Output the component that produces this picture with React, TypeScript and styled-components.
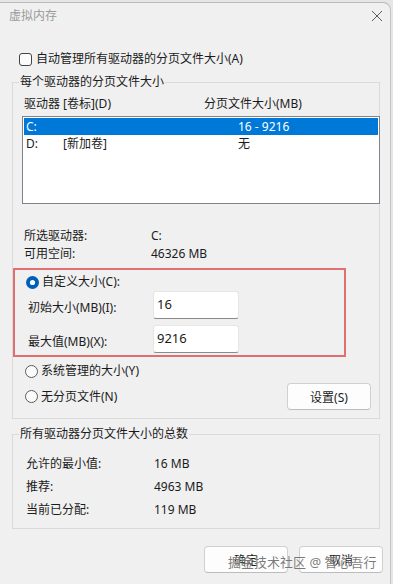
import styled, { createGlobalStyle } from 'styled-components';

const GlobalStyle = createGlobalStyle`
  html, body {
    margin: 0;
    padding: 0;
    background: #e6e6e6;
  }
  * {
    box-sizing: border-box;
  }
`;

const drives = [
  { letter: 'C:', label: '', size: '16 - 9216', selected: true },
  { letter: 'D:', label: '[新加卷]', size: '无', selected: false },
];

const totals = [
  { label: '允许的最小值:', value: '16 MB' },
  { label: '推荐:', value: '4963 MB' },
  { label: '当前已分配:', value: '119 MB' },
];

const Radio = ({ checked }: { checked?: boolean }) => (
  <RadioIcon width={13} height={13} viewBox="0 0 13 13">
    {checked ? (
      <>
        <circle cx="6.5" cy="6.5" r="6.5" fill="#005fb8" />
        <circle cx="6.5" cy="6.5" r="2.6" fill="#ffffff" />
      </>
    ) : (
      <circle cx="6.5" cy="6.5" r="6" fill="#fbfbfb" stroke="#5a5a5a" strokeWidth="1" />
    )}
  </RadioIcon>
);

const App = () => {
  return (
    <>
      <GlobalStyle />
      <Window>
        <TitleBar>
          <Title>虚拟内存</Title>
          <CloseIcon width={12} height={12} viewBox="0 0 12 12">
            <path d="M1 1 L11 11 M11 1 L1 11" stroke="#5c5c5c" strokeWidth="1" fill="none" />
          </CloseIcon>
        </TitleBar>

        <Body>
          <CheckRow>
            <CheckBox />
            <span>自动管理所有驱动器的分页文件大小(A)</span>
          </CheckRow>

          <Group>
            <Legend>每个驱动器的分页文件大小</Legend>
            <ListHeader>
              <DriveCol>驱动器 [卷标](D)</DriveCol>
              <span>分页文件大小(MB)</span>
            </ListHeader>
            <DriveList>
              {drives.map((drive) => (
                <DriveRow key={drive.letter} $selected={drive.selected}>
                  <LetterCell>{drive.letter}</LetterCell>
                  <LabelCell>{drive.label}</LabelCell>
                  <span>{drive.size}</span>
                </DriveRow>
              ))}
            </DriveList>

            <InfoList>
              <InfoRow>
                <InfoLabel>所选驱动器:</InfoLabel>
                <span>C:</span>
              </InfoRow>
              <InfoRow>
                <InfoLabel>可用空间:</InfoLabel>
                <span>46326 MB</span>
              </InfoRow>
            </InfoList>

            <Highlight>
              <RadioRow>
                <Radio checked />
                <span>自定义大小(C):</span>
              </RadioRow>
              <SizeGrid>
                <SizeLabel>初始大小(MB)(I):</SizeLabel>
                <SizeInput>16</SizeInput>
                <SizeLabel>最大值(MB)(X):</SizeLabel>
                <SizeInput>9216</SizeInput>
              </SizeGrid>
            </Highlight>

            <RadioRow $indent>
              <Radio />
              <span>系统管理的大小(Y)</span>
            </RadioRow>
            <SetRow>
              <RadioRow>
                <Radio />
                <span>无分页文件(N)</span>
              </RadioRow>
              <Button $width={84}>设置(S)</Button>
            </SetRow>
          </Group>

          <TotalGroup>
            <Legend>所有驱动器分页文件大小的总数</Legend>
            <TotalList>
              {totals.map((item) => (
                <TotalRow key={item.label}>
                  <TotalLabel>{item.label}</TotalLabel>
                  <span>{item.value}</span>
                </TotalRow>
              ))}
            </TotalList>
          </TotalGroup>
        </Body>

        <Footer>
          <Button $width={84}>确定</Button>
          <Button $width={84}>取消</Button>
          <Watermark>掘金技术社区 @ 智心吾行</Watermark>
        </Footer>
      </Window>
    </>
  );
};

export default App;

const Window = styled.div`
  position: relative;
  width: 391px;
  height: 582px;
  margin-top: 2px;
  background: #f0f0f0;
  border-top: 1px solid #b9b9b9;
  border-right: 1px solid #c4c4c4;
  border-top-right-radius: 8px;
  font-family: 'Noto Sans', 'Noto Sans CJK SC', sans-serif;
  font-size: 12px;
  color: #1b1b1b;
  overflow: hidden;
`;

const TitleBar = styled.div`
  display: flex;
  align-items: center;
  justify-content: space-between;
  height: 25px;
  padding: 0 7px 0 9px;
`;

const Title = styled.span`
  color: #9a9a9a;
  font-size: 12px;
  line-height: 14px;
`;

const CloseIcon = styled.svg`
  display: block;
`;

const Body = styled.div`
  padding: 0 10px 0 12px;
`;

const CheckRow = styled.div`
  display: flex;
  align-items: center;
  column-gap: 4px;
  height: 16px;
  margin: 23px 0 0 7px;
  line-height: 16px;
`;

const CheckBox = styled.span`
  display: block;
  width: 13px;
  height: 13px;
  border: 1px solid #444;
  border-radius: 3px;
  background: #fbfbfb;
`;

const Group = styled.fieldset`
  margin: 8px 0 0;
  padding: 0 0 8px;
  min-width: 0;
  border: 1px solid #dadada;
`;

const TotalGroup = styled(Group)`
  margin-top: 8px;
  padding-bottom: 7px;
`;

const Legend = styled.legend`
  margin-left: 6px;
  padding: 0 1px;
  line-height: 14px;
  font-size: 12px;
`;

const ListHeader = styled.div`
  display: flex;
  height: 16px;
  margin-top: 7px;
  padding-left: 11px;
  line-height: 16px;
`;

const DriveCol = styled.span`
  width: 180px;
`;

const DriveList = styled.div`
  height: 88px;
  margin: 4px -1px 0 9px;
  padding: 1px;
  background: #ffffff;
  border: 1px solid #7f858c;
`;

const DriveRow = styled.div<{ $selected?: boolean }>`
  display: flex;
  height: 17px;
  padding-left: 2px;
  line-height: 17px;
  background: ${({ $selected }) => ($selected ? '#0078d7' : 'transparent')};
  color: ${({ $selected }) => ($selected ? '#ffffff' : '#1b1b1b')};
`;

const LetterCell = styled.span`
  width: 37px;
`;

const LabelCell = styled.span`
  width: 175px;
`;

const InfoList = styled.div`
  margin-top: 23px;
  padding-left: 11px;
`;

const InfoRow = styled.div`
  display: flex;
  height: 18px;
  line-height: 18px;
`;

const InfoLabel = styled.span`
  width: 127px;
`;

const Highlight = styled.div`
  width: 333px;
  margin-top: 5px;
  padding: 0 0 2px 11px;
  border: 2px solid #e07070;
`;

const RadioRow = styled.div<{ $indent?: boolean }>`
  display: flex;
  align-items: center;
  column-gap: 3px;
  height: 16px;
  margin: ${({ $indent }) => ($indent ? '6px 0 0 12px' : '4px 0 0')};
  line-height: 16px;
`;

const RadioIcon = styled.svg`
  display: block;
  flex-shrink: 0;
`;

const SizeGrid = styled.div`
  display: grid;
  grid-template-columns: 125px 86px;
  row-gap: 6px;
  margin-top: 1px;
  padding-left: 2px;
`;

const SizeLabel = styled.span`
  align-self: center;
  padding-top: 3px;
`;

const SizeInput = styled.div`
  height: 28px;
  padding: 4px 3px 0;
  line-height: 16px;
  font-size: 13px;
  background: #ffffff;
  border: 1px solid #e6e6e6;
  border-bottom: 1px solid #8a8a8a;
  border-radius: 3px;
`;

const SetRow = styled.div`
  display: flex;
  align-items: center;
  justify-content: space-between;
  height: 27px;
  margin-top: 4px;
  padding: 0 8px 0 12px;

  ${RadioRow} {
    margin-top: 0;
  }
`;

const Button = styled.div<{ $width: number }>`
  display: flex;
  align-items: center;
  justify-content: center;
  width: ${({ $width }) => $width}px;
  height: 27px;
  background: #fdfdfd;
  border: 1px solid #d0d0d0;
  border-bottom-color: #bcbcbc;
  border-radius: 4px;
  font-size: 12px;
`;

const TotalList = styled.div`
  margin-top: 11px;
  padding-left: 13px;
`;

const TotalRow = styled.div`
  display: flex;
  height: 23px;
  line-height: 23px;
`;

const TotalLabel = styled.span`
  width: 128px;
`;

const Footer = styled.div`
  position: relative;
  display: flex;
  justify-content: flex-end;
  column-gap: 11px;
  margin-top: 17px;
  padding-right: 7px;
`;

const Watermark = styled.span`
  position: absolute;
  left: 228px;
  top: 7px;
  font-size: 13px;
  line-height: 18px;
  color: rgba(70, 70, 70, 0.72);
  text-shadow: 0 0 1px #ffffff;
  white-space: nowrap;
`;
